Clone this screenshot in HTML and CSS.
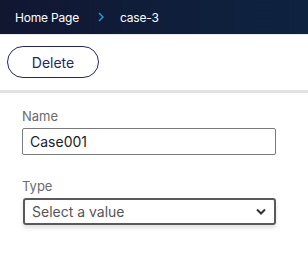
FILE: index.html
```html
<!DOCTYPE html>
<html>
<head>
<meta charset="utf-8">
<link rel="stylesheet" href="styles.css">
</head>
<body>
<header class="topbar">
  <nav class="crumbs">
    <span class="crumb">Home Page</span>
    <svg class="sep" width="6" height="10" viewBox="0 0 6 10"><path d="M1 1 L5 5 L1 9" fill="none" stroke="#2a9fd8" stroke-width="1.4"/></svg>
    <span class="crumb">case-3</span>
  </nav>
</header>
<div class="toolbar">
  <button class="btn">Delete</button>
</div>
<div class="divider"></div>
<form class="form">
  <label class="field">
    <span class="label">Name</span>
    <input class="input" type="text" value="Case001">
  </label>
  <label class="field">
    <span class="label">Type</span>
    <div class="select">
      <span class="placeholder">Select a value</span>
      <svg width="10" height="7" viewBox="0 0 10 7"><path d="M1 1.5 L5 5.5 L9 1.5" fill="none" stroke="#333" stroke-width="2"/></svg>
    </div>
  </label>
</form>
</body>
</html>
```
FILE: styles.css
```css
html, body { margin: 0; padding: 0; background: #fff; }
body { font-family: Inter, "Liberation Sans", Arial, sans-serif; width: 308px; height: 274px; overflow: hidden; }
.topbar {
  height: 34px;
  background: linear-gradient(90deg, #111631 0%, #0f1f3b 60%, #0e2340 100%);
  border-bottom: 1px solid #e8e8e8;
  display: flex;
  align-items: center;
  padding-left: 15px;
}
.crumbs { display: flex; align-items: center; color: #fff; font-size: 12px; }
.crumb { letter-spacing: -0.2px; }
.sep { margin: 0 16px 0 19px; }
.toolbar { padding: 11px 7px 12px; }
.btn {
  width: 92px; height: 32px;
  border: 1px solid #23285f;
  border-radius: 16px;
  background: #fff;
  color: #23285f;
  font-family: inherit;
  font-size: 14px;
  padding: 0;
}
.divider { height: 3px; background: #e2e2e2; }
.form { padding: 15px 32px 0 22px; display: flex; flex-direction: column; gap: 23px; }
.field { display: flex; flex-direction: column; }
.label { font-size: 13px; color: #6b6b6b; line-height: 16px; margin-bottom: 4px; }
.input {
  height: 27px; box-sizing: border-box;
  border: 1px solid #7a7a7a; border-radius: 2px;
  font-family: inherit; font-size: 14px; color: #222;
  padding: 0 7px; margin: 0;
}
.select {
  height: 27px; box-sizing: border-box;
  border: 2px solid #5a5a5a; border-radius: 3px;
  display: flex; align-items: center; justify-content: space-between;
  padding: 0 8px 0 7px;
  box-shadow: 0 3px 4px rgba(0,0,0,0.12);
  margin-left: 1px;
}
.placeholder { font-size: 14px; color: #555; }
```
